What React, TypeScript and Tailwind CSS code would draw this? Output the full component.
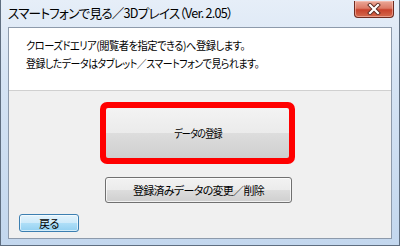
import React from 'react';

const jp = "font-['Noto_Sans_CJK_JP','Noto_Sans',sans-serif] [font-feature-settings:'palt']";

const winBtn =
  'flex items-center justify-center rounded-[3px] border border-[#707070] bg-[linear-gradient(#f2f2f2_0%,#ebebeb_50%,#dddddd_50%,#cfcfcf_100%)] shadow-[inset_0_0_0_1px_rgba(255,255,255,0.7)] text-[11px] tracking-[-0.7px] text-black';

function CloseButton() {
  return (
    <div className="flex h-[17px] w-[40px] items-center justify-center rounded-b-[4px] border border-t-0 border-[#6e2b20] bg-[linear-gradient(#eaa898_0%,#dc7a66_45%,#c8422c_55%,#d36a4e_100%)] shadow-[inset_0_0_0_1px_rgba(255,210,200,0.5)]">
      <svg width="14" height="12" viewBox="0 0 14 12">
        <path d="M3 2 L11 10 M11 2 L3 10" stroke="#5a2a22" strokeWidth="4" strokeLinecap="square" />
        <path d="M3 2 L11 10 M11 2 L3 10" stroke="#ffffff" strokeWidth="2.2" strokeLinecap="square" />
      </svg>
    </div>
  );
}

export default function App() {
  return (
    <div className="h-[247px] w-[400px] overflow-hidden bg-white">
      <div className="flex h-[246px] w-[400px] flex-col border-x border-b border-[#5f6e80] bg-[linear-gradient(#e6eef8_0%,#d6e4f4_30%,#c3d7ee_100%)] px-[7px] pb-[6px]">
        {/* title bar */}
        <div className="flex h-[27px] shrink-0 items-start justify-between">
          <div className={`${jp} pt-[3px] text-[13px] leading-[20px] tracking-[-0.8px] text-black`}>
            {/* Meiryo UI runs narrower than Noto, so squeeze a little */}
            <span className="inline-block origin-left whitespace-nowrap [transform:scaleX(0.97)]">
              スマートフォンで見る／3Dプレイス（Ver. 2.05）
            </span>
          </div>
          <div className="mr-[-2px] pt-[1px]">
            <CloseButton />
          </div>
        </div>

        {/* client area */}
        <div className={`${jp} flex flex-1 flex-col border border-[#8d9aab] bg-[#f0f0f0]`}>
          <div className="flex h-[63px] flex-col items-start border-b border-[#d0d0d0] bg-white pl-[17px] pt-[8px] text-[11px] leading-[18px] tracking-[-0.5px] text-black">
            <span className="inline-block origin-left whitespace-nowrap [transform:scaleX(0.93)]">
              クローズドエリア(閲覧者を指定できる)へ登録します。
            </span>
            <span className="inline-block origin-left whitespace-nowrap [transform:scaleX(0.9)]">
              登録したデータはタブレット／スマートフォンで見られます。
            </span>
          </div>

          <div className="flex flex-1 flex-col pt-[11px]">
            <div className="ml-[91px] h-[62px] w-[195px] rounded-[7px] bg-[#ff0000] p-[6px]">
              <div className="flex h-full w-full items-center justify-center rounded-[2px] bg-[linear-gradient(#f3f3f3_0%,#ebebeb_50%,#dddddd_50%,#cfcfcf_100%)] text-[11px] tracking-[-0.9px] text-black">
                <span className="inline-block whitespace-nowrap [transform:scaleX(0.82)]">データの登録</span>
              </div>
            </div>

            <div className={`${winBtn} ml-[96px] mt-[13px] h-[26px] w-[187px]`}>登録済みデータの変更／削除</div>

            <div className="ml-[10px] mt-[11px] flex h-[18px] w-[60px] items-center justify-center rounded-[3px] border border-[#3c7fb1] bg-[linear-gradient(#e3f3fc_0%,#cdeafa_50%,#afdff8_50%,#93d0f1_100%)] shadow-[inset_0_0_0_1px_rgba(255,255,255,0.6)] text-[11px] tracking-[-0.5px] text-black">
              戻る
            </div>
          </div>
        </div>
      </div>
    </div>
  );
}
